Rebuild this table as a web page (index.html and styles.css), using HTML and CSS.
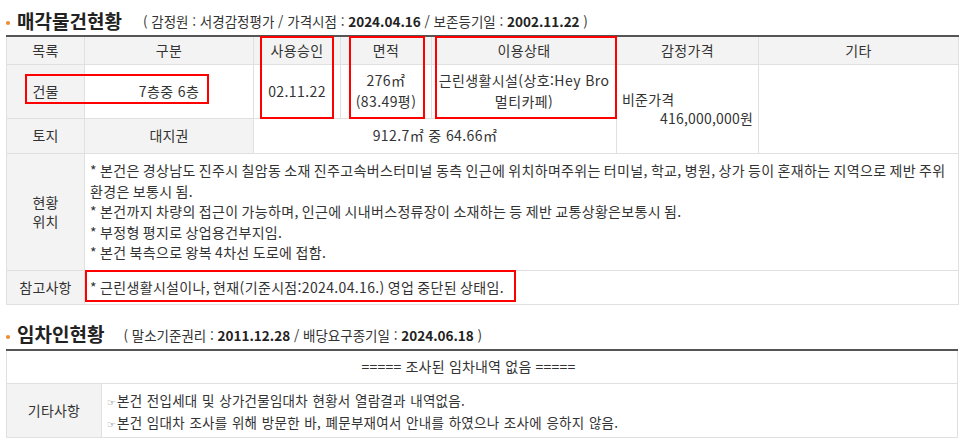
FILE: index.html
```html
<!DOCTYPE html>
<html lang="ko">
<head>
<meta charset="utf-8">
<title>매각물건현황</title>
<link rel="stylesheet" href="styles.css">
</head>
<body>
<div class="page">
  <h2 class="sec-head">
    <span class="dot"></span>
    <span class="sec-title">매각물건현황</span>
    <span class="sec-sub">( 감정원 : 서경감정평가 / 가격시점 : <b>2024.04.16</b> / 보존등기일 : <b>2002.11.22</b> )</span>
  </h2>
  <table class="grid">
    <colgroup>
      <col class="c-list"><col class="c-kind"><col class="c-date"><col class="c-area"><col class="c-use"><col class="c-price"><col class="c-etc">
    </colgroup>
    <tr class="r-head">
      <th>목록</th><th>구분</th><th>사용승인</th><th>면적</th><th>이용상태</th><th>감정가격</th><th>기타</th>
    </tr>
    <tr class="r-bldg">
      <td class="lbl">건물</td>
      <td>7층중 6층</td>
      <td>02.11.22</td>
      <td>276㎡<br>(83.49평)</td>
      <td>근린생활시설(상호:Hey Bro 멀티카페)</td>
      <td rowspan="2" class="price"><div>비준가격</div><div class="amt">416,000,000원</div></td>
      <td rowspan="2"></td>
    </tr>
    <tr class="r-land">
      <td class="lbl">토지</td>
      <td class="lbl">대지권</td>
      <td colspan="3">912.7㎡ 중 64.66㎡</td>
    </tr>
    <tr class="r-loc">
      <td class="lbl">현황<br>위치</td>
      <td colspan="6" class="desc">* 본건은 경상남도 진주시 칠암동 소재 진주고속버스터미널 동측 인근에 위치하며주위는 터미널, 학교, 병원, 상가 등이 혼재하는 지역으로 제반 주위 환경은 보통시 됨.<br>* 본건까지 차량의 접근이 가능하며, 인근에 시내버스정류장이 소재하는 등 제반 교통상황은보통시 됨.<br>* 부정형 평지로 상업용건부지임.<br>* 본건 북측으로 왕복 4차선 도로에 접함.</td>
    </tr>
    <tr class="r-note">
      <td class="lbl">참고사항</td>
      <td colspan="6" class="desc">* 근린생활시설이나, 현재(기준시점:2024.04.16.) 영업 중단된 상태임.</td>
    </tr>
  </table>

  <h2 class="sec-head sec-head-2">
    <span class="dot"></span>
    <span class="sec-title">임차인현황</span>
    <span class="sec-sub sub-2">( 말소기준권리 : <b>2011.12.28</b> / 배당요구종기일 : <b>2024.06.18</b> )</span>
  </h2>
  <table class="grid">
    <colgroup>
      <col class="c-label2"><col>
    </colgroup>
    <tr class="r-none">
      <td colspan="2" class="none">===== 조사된 임차내역 없음 =====</td>
    </tr>
    <tr class="r-misc">
      <td class="lbl">기타사항</td>
      <td class="desc misc"><span class="hand">☞</span>본건 전입세대 및 상가건물임대차 현황서 열람결과 내역없음.<br><span class="hand">☞</span>본건 임대차 조사를 위해 방문한 바, 폐문부재여서 안내를 하였으나 조사에 응하지 않음.</td>
    </tr>
  </table>

  <div class="mark mark-a"></div>
  <div class="mark mark-b"></div>
  <div class="mark mark-c"></div>
  <div class="mark mark-d"></div>
  <div class="mark mark-e"></div>
</div>
</body>
</html>
```

FILE: styles.css
```css
html, body {
  margin: 0;
  padding: 0;
  background: #fff;
}
body {
  font-family: "Noto Sans CJK KR", "Noto Sans", sans-serif;
  font-size: 14px;
  letter-spacing: 0.4px;
  color: #333;
  word-break: keep-all;
}
.page {
  position: relative;
  width: 952px;
  padding: 0 8px 0 6px;
}
.sec-head {
  display: flex;
  align-items: center;
  height: 26px;
  margin: 0;
  padding: 7px 0 2px 0;
  font-weight: normal;
  letter-spacing: 0;
}
.sec-head-2 {
  margin-top: 9px;
}
.dot {
  width: 4px;
  height: 4px;
  border-radius: 50%;
  background: #f0892a;
  margin-top: 6px;
  margin-right: 7px;
}
.sec-title {
  font-size: 19px;
  font-weight: bold;
  color: #222;
  letter-spacing: 0;
}
.sec-sub {
  font-size: 13.5px;
  color: #333;
  margin-left: 21px;
  margin-top: 2px;
}
.sub-2 {
  margin-left: 19px;
}
.sec-sub b {
  font-weight: bold;
  color: #222;
}
.grid {
  width: 952px;
  border-collapse: collapse;
  table-layout: fixed;
  border-top: 2px solid #555;
}
.grid th, .grid td {
  border: 1px solid #e0e0e0;
  padding: 0 5px;
  text-align: center;
  vertical-align: middle;
  font-weight: normal;
  line-height: 21px;
}
.grid th {
  background: #f3f3f3;
  color: #333;
}
.grid tr:first-child th, .grid tr:first-child td {
  border-top: 2px solid #555;
}
.c-list { width: 78px; }
.c-kind { width: 169px; }
.c-date { width: 87px; }
.c-area { width: 91px; }
.c-use { width: 185px; }
.c-price { width: 142px; }
.c-etc { width: 200px; }
.c-label2 { width: 95px; }

.lbl {
  background: #f3f3f3;
  color: #333;
}
.r-head { height: 28px; }
.r-bldg { height: 54px; }
.r-land { height: 35px; }
.r-loc { height: 117px; }
.r-note { height: 34px; }
.r-none { height: 34px; }
.r-misc { height: 54px; }

.grid .lbl { line-height: 19px; letter-spacing: 0.2px; }
.grid .price {
  text-align: left;
  line-height: 19px;
  letter-spacing: 0.2px;
}
.price .amt {
  text-align: right;
}
.grid .desc {
  text-align: left;
  line-height: 20.5px;
  padding: 6px 5px 6px 5px;
  letter-spacing: 0.35px;
  word-spacing: -1.2px;
}
.r-note td {
  border-top: 1px solid #555;
}
.r-note .desc {
  padding: 0 5px;
}
.grid .misc {
  font-size: 13.5px;
  letter-spacing: 0.25px;
  word-spacing: 0.5px;
  line-height: 22px;
  padding: 3px 5px;
}
.grid .none {
  padding-right: 32px;
  letter-spacing: 0.2px;
}
.hand {
  display: inline-block;
  font-family: "DejaVu Sans", sans-serif;
  font-size: 10px;
  line-height: 10px;
  color: #888;
  margin-right: 1px;
  letter-spacing: 0;
}

.mark {
  position: absolute;
  border: 2px solid #f00;
  box-sizing: border-box;
}
.mark-a { left: 25px; top: 74px; width: 184px; height: 30px; }
.mark-b { left: 260px; top: 36px; width: 74px; height: 83px; }
.mark-c { left: 349px; top: 36px; width: 76px; height: 83px; }
.mark-d { left: 435px; top: 36px; width: 182px; height: 83px; }
.mark-e { left: 85px; top: 270px; width: 431px; height: 32px; }
```
